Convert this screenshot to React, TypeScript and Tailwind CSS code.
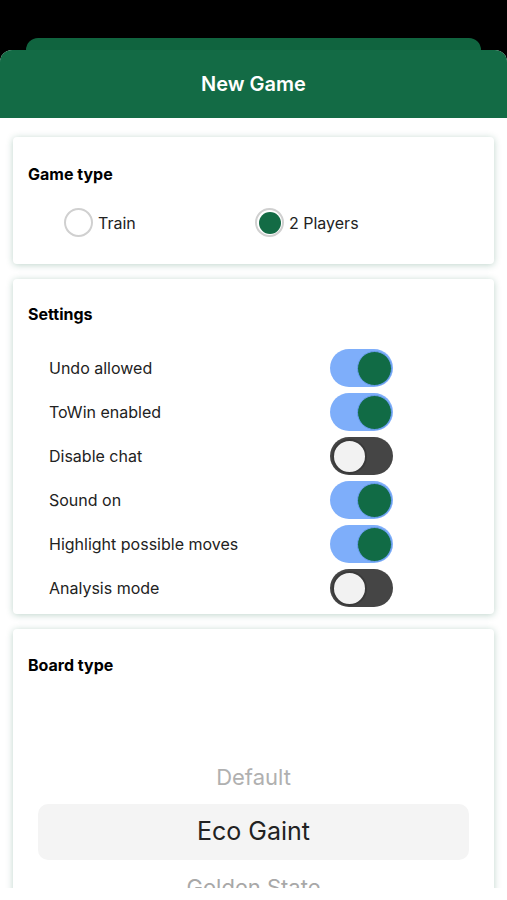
import React from 'react';

const SETTINGS = [
  { label: 'Undo allowed', on: true },
  { label: 'ToWin enabled', on: true },
  { label: 'Disable chat', on: false },
  { label: 'Sound on', on: true },
  { label: 'Highlight possible moves', on: true },
  { label: 'Analysis mode', on: false },
];

function Toggle({ on }: { on: boolean }) {
  if (on) {
    return (
      <div className="w-[63px] h-[38px] rounded-full bg-[#7eaefa] flex items-center justify-end pr-[1px]">
        <div className="w-[35px] h-[35px] rounded-full bg-[#116b45] border border-[#6b9ef0]" />
      </div>
    );
  }
  return (
    <div className="w-[63px] h-[38px] rounded-full bg-[#454545] flex items-center pl-[2px]">
      <div className="w-[35px] h-[35px] rounded-full bg-[#f2f2f2] border-2 border-[#3a3a3a]" />
    </div>
  );
}

function Radio({ checked, label }: { checked: boolean; label: string }) {
  return (
    <div className="flex items-center">
      <div className="w-[29px] h-[29px] rounded-full border-2 border-[#d0d0d0] bg-white flex items-center justify-center">
        {checked && <div className="w-[22px] h-[22px] rounded-full bg-[#136b45]" />}
      </div>
      <span className="ml-[5px] text-[16px] text-[#222]">{label}</span>
    </div>
  );
}

function Card({ children, className }: { children: React.ReactNode; className?: string }) {
  return (
    <div className={`bg-white rounded-[4px] shadow-[0_1px_7px_rgba(20,100,70,0.28)] ${className ?? ''}`}>
      {children}
    </div>
  );
}

export default function App() {
  return (
    <div
      className="w-[507px] h-[900px] bg-black overflow-hidden flex flex-col"
      style={{ fontFamily: 'Inter, "Noto Sans", sans-serif' }}
    >
      <div className="h-[38px] shrink-0" />
      {/* stacked sheet behind */}
      <div className="mx-[26px] h-[12px] shrink-0 rounded-t-[12px] bg-[#10643f]" />
      <div className="flex-1 flex flex-col bg-white rounded-t-[12px] overflow-hidden">
        <div className="h-[68px] shrink-0 bg-[#136b45] flex items-center justify-center">
          <h1 className="text-[20px] font-semibold text-white">New Game</h1>
        </div>

        <div className="h-[770px] overflow-hidden px-[13px] pt-[19px] flex flex-col gap-[15px]">
          {/* Game type */}
          <Card className="px-[15px] pt-[27px] pb-[27px] shrink-0">
            <h2 className="text-[16px] leading-[20px] font-bold text-black">Game type</h2>
            <div className="mt-[24px] flex items-center pl-[36px]">
              <div className="w-[191px]">
                <Radio checked={false} label="Train" />
              </div>
              <Radio checked label="2 Players" />
            </div>
          </Card>

          {/* Settings */}
          <Card className="pt-[25px] pb-[4px] shrink-0">
            <h2 className="px-[15px] text-[16px] leading-[20px] font-bold text-black">Settings</h2>
            <div className="mt-[22px] flex flex-col">
              {SETTINGS.map((s) => (
                <div key={s.label} className="h-[44px] flex items-center pl-[36px]">
                  <span className="w-[281px] text-[16px] text-[#222]">{s.label}</span>
                  <Toggle on={s.on} />
                </div>
              ))}
            </div>
          </Card>

          {/* Board type */}
          <Card className="pt-[26px] pb-[20px] shrink-0">
            <h2 className="px-[15px] text-[16px] leading-[20px] font-bold text-black">Board type</h2>
            <div className="mt-[75px] px-[25px] flex flex-col">
              <div className="h-[54px] flex items-center justify-center text-[22px] text-[#b0b0b0]">Default</div>
              <div className="h-[56px] rounded-[10px] bg-[#f4f4f4] flex items-center justify-center text-[25px] text-[#222]">
                Eco Gaint
              </div>
              <div className="h-[54px] flex items-center justify-center text-[22px] text-[#a8a8a8]">Golden State</div>
            </div>
          </Card>
        </div>
        <div className="flex-1 bg-white" />
      </div>
    </div>
  );
}
